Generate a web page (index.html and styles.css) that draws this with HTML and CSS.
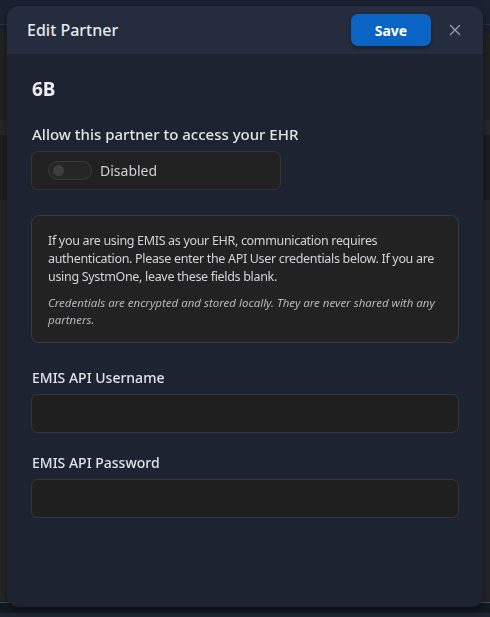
FILE: index.html
```html
<!DOCTYPE html>
<html>
<head>
<meta charset="utf-8">
<link rel="stylesheet" href="styles.css">
</head>
<body>
<div class="page">
  <div class="topbar"></div>
  <div class="subbar"></div>
  <div class="content">
    <div class="band b1"></div>
    <div class="band b2"></div>
    <div class="band b3"></div>
    <div class="band b4"></div>
  </div>
  <div class="footer-line"></div>
  <div class="footer"></div>
</div>

<div class="modal">
  <div class="modal-header">
    <h2 class="modal-title">Edit Partner</h2>
    <div class="header-actions">
      <button class="btn-save">Save</button>
      <button class="btn-close" aria-label="Close">
        <svg width="12" height="12" viewBox="0 0 12 12"><path d="M1.5 1.5 L10.5 10.5 M10.5 1.5 L1.5 10.5" stroke="#9aa0ab" stroke-width="1.3" fill="none" stroke-linecap="round"/></svg>
      </button>
    </div>
  </div>
  <div class="modal-body">
    <h3 class="partner-name">6B</h3>
    <div class="field">
      <div class="label">Allow this partner to access your EHR</div>
      <div class="toggle-box">
        <span class="switch"><span class="knob"></span></span>
        <span class="toggle-text">Disabled</span>
      </div>
    </div>
    <div class="info-box">
      <p class="info-main">If you are using EMIS as your EHR, communication requires authentication. Please enter the API User credentials below. If you are using SystmOne, leave these fields blank.</p>
      <p class="info-note">Credentials are encrypted and stored locally. They are never shared with any partners.</p>
    </div>
    <div class="field input-field">
      <div class="label small">EMIS API Username</div>
      <input class="text-input" type="text">
    </div>
    <div class="field input-field second">
      <div class="label small">EMIS API Password</div>
      <input class="text-input" type="password">
    </div>
  </div>
</div>
</body>
</html>
```

FILE: styles.css
```css
* { box-sizing: border-box; }
html, body { margin: 0; padding: 0; }
body {
  width: 490px;
  height: 617px;
  overflow: hidden;
  background: #1f1f1f;
  font-family: "Noto Sans", "Open Sans", sans-serif;
}
.page {
  height: 617px;
  display: flex;
  flex-direction: column;
}
.topbar { height: 25px; background: #1b2131; border-bottom: 1px solid #2a3244; }
.subbar { height: 8px; background: #1a2030; }
.content { flex: 1; display: flex; flex-direction: column; background: #222222; }
.b1 { height: 87px; background: #222222; }
.b2 { height: 15px; background: #282828; }
.b3 { height: 65px; background: #1e1e1e; }
.b4 { flex: 1; background: #252525; }
.footer-line { height: 1px; background: #3b4b5e; }
.footer { height: 14px; background: linear-gradient(#151a22 0, #151a22 10px, #1f2637 10px); }

.modal {
  position: fixed;
  left: 7px;
  top: 6px;
  width: 476px;
  height: 601px;
  border-radius: 12px;
  overflow: hidden;
  background: #1e2331;
  box-shadow: 0 4px 10px rgba(0,0,0,0.45);
  display: flex;
  flex-direction: column;
}
.modal-header {
  height: 48px;
  background: #242c3e;
  display: flex;
  align-items: center;
  justify-content: space-between;
  padding: 0 16px 0 20px;
}
.modal-title {
  margin: 0;
  font-size: 16px;
  font-weight: 500;
  color: #e6e8ec;
}
.header-actions { display: flex; align-items: center; gap: 12px; }
.btn-save {
  width: 80px;
  height: 32px;
  border: none;
  border-radius: 7px;
  background: #0a64c4;
  color: #ffffff;
  font-family: inherit;
  font-size: 14px;
  font-weight: 700;
  box-shadow: 0 2px 4px rgba(0,0,0,0.3);
}
.btn-close {
  width: 24px;
  height: 24px;
  padding: 0;
  border: none;
  background: transparent;
  display: flex;
  align-items: center;
  justify-content: center;
}
.modal-body {
  padding: 22px 24px 0 24px;
  display: flex;
  flex-direction: column;
}
.partner-name {
  margin: 0 0 22px 1px;
  font-size: 19px;
  font-weight: 700;
  color: #eceef2;
  line-height: 26px;
}
.field { display: flex; flex-direction: column; gap: 7px; }
.input-field { gap: 6px; }
.input-field.second { margin-top: 20px; }
.label {
  margin-left: 1px;
  font-size: 15px;
  font-weight: 500;
  color: #e2e4e8;
  line-height: 20px;
}
.label.small { font-size: 14px; }
.toggle-box {
  width: 250px;
  height: 39px;
  background: #212121;
  border: 1px solid #353535;
  border-radius: 7px;
  display: flex;
  align-items: center;
  padding-left: 16px;
  gap: 8px;
}
.switch {
  width: 44px;
  height: 19px;
  border: 1px solid #3a3a3a;
  background: #262626;
  border-radius: 10px;
  display: flex;
  align-items: center;
  padding-left: 4px;
}
.knob {
  width: 11px;
  height: 11px;
  border-radius: 50%;
  background: #3e3e3e;
}
.toggle-text {
  font-size: 14px;
  color: #cfd1d4;
}
.info-box {
  margin-top: 25px;
  margin-bottom: 25px;
  background: #222222;
  border: 1px solid #363a42;
  border-radius: 8px;
  padding: 16px 16px 14px 16px;
}
.info-main {
  margin: 0;
  font-size: 12.5px;
  letter-spacing: -0.32px;
  line-height: 18px;
  color: #d2d4d8;
}
.info-note {
  margin: 8px 0 0 0;
  font-size: 11.5px;
  line-height: 17px;
  font-style: italic;
  color: #b4b7bc;
}
.text-input {
  width: 100%;
  height: 39px;
  background: #1f1f1f;
  border: 1px solid #34373d;
  border-radius: 7px;
  outline: none;
}
```
